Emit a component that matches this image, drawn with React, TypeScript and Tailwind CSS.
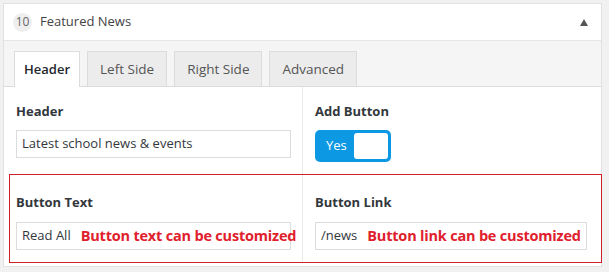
import React from "react";

const font = { fontFamily: "'Open Sans', 'Noto Sans', sans-serif" };

const Tab = ({ label, active }: { label: string; active?: boolean }) => (
  <div
    className={
      active
        ? "h-[36px] px-[9px] flex items-center border border-b-0 border-[#dcdcdc] bg-white text-[13px] font-semibold text-[#23282d] -mb-px"
        : "h-[35px] px-[12px] flex items-center border border-b-0 border-[#dcdcdc] bg-[#ececec] text-[13.5px] text-[#555]"
    }
  >
    {label}
  </div>
);

const Field = ({ value, note, width }: { value: string; note?: string; width: string }) => (
  <div
    className={`h-[28px] ${width} border border-[#dcdcdc] bg-white flex items-center pl-[5px] text-[13px] text-[#32373c] whitespace-nowrap`}
  >
    <span>{value}</span>
    {note && (
      <span className="ml-[10px] text-[14.5px] font-bold text-[#e0202c] tracking-[-0.2px]">
        {note}
      </span>
    )}
  </div>
);

export default function App() {
  return (
    <div
      className="w-[609px] h-[272px] bg-[#f1f1f1] pt-[3px] pl-[3px] pr-[7px] pb-[5px]"
      style={font}
    >
      <div className="h-[264px] border border-[#e1e1e1] bg-white flex flex-col">
        {/* title row */}
        <div className="h-[37px] border-b border-[#e5e5e5] flex items-center pl-[9px] pr-[13px]">
          <div className="w-[19px] h-[19px] rounded-full bg-[#eeeeee] flex items-center justify-center text-[12px] text-[#666]">
            10
          </div>
          <div className="ml-[8px] text-[13px] text-[#444]">Featured News</div>
          <div className="ml-auto w-0 h-0 border-l-[4px] border-r-[4px] border-b-[7px] border-l-transparent border-r-transparent border-b-[#555]" />
        </div>

        {/* tabs */}
        <div className="h-[46px] bg-[#f5f5f5] border-b border-[#dcdcdc] flex items-end gap-[7px] pl-[10px]">
          <Tab label="Header" active />
          <Tab label="Left Side" />
          <Tab label="Right Side" />
          <Tab label="Advanced" />
        </div>

        {/* first row */}
        <div className="flex h-[87px]">
          <div className="w-[299px] border-r border-[#eaeaea] pl-[12px] pt-[15px]">
            <div className="h-[20px] flex items-center text-[13px] font-bold text-[#32373c]">
              Header
            </div>
            <div className="mt-[8px]">
              <Field value="Latest school news & events" width="w-[275px]" />
            </div>
          </div>
          <div className="flex-1 pl-[12px] pt-[15px]">
            <div className="h-[20px] flex items-center text-[13px] font-bold text-[#32373c]">
              Add Button
            </div>
            <div className="mt-[8px] w-[76px] h-[32px] rounded-[5px] bg-[#0d98e3] flex items-center pl-[11px] pr-[3px]">
              <span className="text-[13px] text-white">Yes</span>
              <div className="ml-auto w-[34px] h-[26px] rounded-[3px] bg-white" />
            </div>
          </div>
        </div>

        {/* annotated row */}
        <div className="ml-[5px] -mr-px h-[89px] border border-[#d0212b] flex">
          <div className="w-[293px] border-r border-[#eaeaea] pl-[6px] pt-[18px]">
            <div className="h-[20px] flex items-center text-[13px] font-bold text-[#32373c]">
              Button Text
            </div>
            <div className="mt-[9px]">
              <Field value="Read All" note="Button text can be customized" width="w-[275px]" />
            </div>
          </div>
          <div className="flex-1 pl-[12px] pt-[18px]">
            <div className="h-[20px] flex items-center text-[13px] font-bold text-[#32373c]">
              Button Link
            </div>
            <div className="mt-[9px]">
              <Field value="/news" note="Button link can be customized" width="w-[272px]" />
            </div>
          </div>
        </div>
      </div>
    </div>
  );
}
